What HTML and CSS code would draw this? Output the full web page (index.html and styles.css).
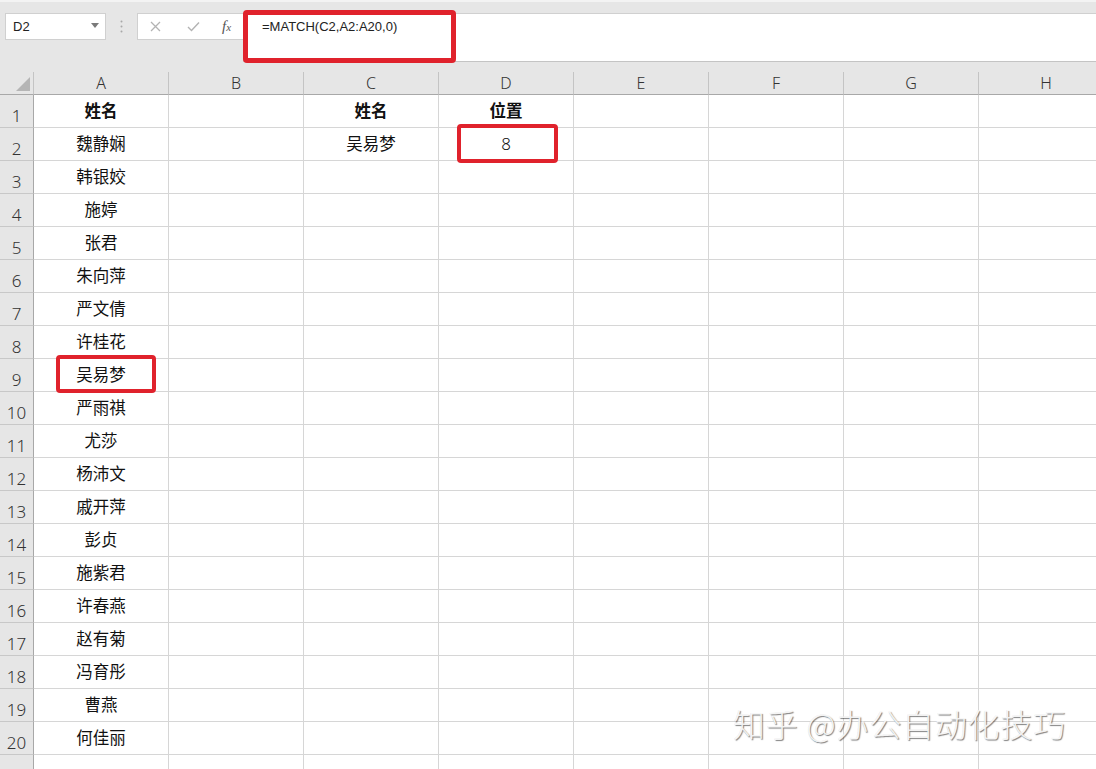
FILE: index.html
```html
<!DOCTYPE html>
<html lang="zh-CN">
<head>
<meta charset="utf-8">
<title>MATCH</title>
<link rel="stylesheet" href="styles.css">
</head>
<body>
<div class="app">
  <div class="toolbar">
    <div class="namebox">
      <span class="nb-text">D2</span>
      <svg class="nb-arrow" width="8" height="5" viewBox="0 0 8 5"><path d="M0 0H8L4 5Z" fill="#7a7a7a"/></svg>
    </div>
    <div class="dots">
      <svg width="3" height="13" viewBox="0 0 3 13"><circle cx="1.5" cy="1.5" r="1" fill="#a8a8a8"/><circle cx="1.5" cy="6.5" r="1" fill="#a8a8a8"/><circle cx="1.5" cy="11.5" r="1" fill="#a8a8a8"/></svg>
    </div>
    <div class="fbtns">
      <svg class="ico-x" width="11" height="11" viewBox="0 0 11 11"><path d="M1 1L10 10M10 1L1 10" stroke="#b3b3b3" stroke-width="1.3" fill="none"/></svg>
      <svg class="ico-ok" width="13" height="11" viewBox="0 0 13 11"><path d="M1 6L4.5 9.5L12 1.5" stroke="#b3b3b3" stroke-width="1.4" fill="none"/></svg>
      <span class="fx"><i>f</i><span class="fxx">x</span></span>
    </div>
    <div class="finput">=MATCH(C2,A2:A20,0)</div>
  </div>

  <div class="sheet">
    <div class="row head">
      <div class="corner"><svg width="14" height="14" viewBox="0 0 14 14"><path d="M14 0V14H0Z" fill="#b5b5b5"/></svg></div>
      <div class="ch">A</div><div class="ch">B</div><div class="ch">C</div><div class="ch">D</div><div class="ch">E</div><div class="ch">F</div><div class="ch">G</div><div class="ch">H</div>
    </div>
    <div class="row"><div class="rh">1</div><div class="c b">姓名</div><div class="c"></div><div class="c b">姓名</div><div class="c b">位置</div><div class="c"></div><div class="c"></div><div class="c"></div><div class="c"></div></div>
    <div class="row"><div class="rh">2</div><div class="c">魏静娴</div><div class="c"></div><div class="c">吴易梦</div><div class="c num">8</div><div class="c"></div><div class="c"></div><div class="c"></div><div class="c"></div></div>
    <div class="row"><div class="rh">3</div><div class="c">韩银姣</div><div class="c"></div><div class="c"></div><div class="c"></div><div class="c"></div><div class="c"></div><div class="c"></div><div class="c"></div></div>
    <div class="row"><div class="rh">4</div><div class="c">施婷</div><div class="c"></div><div class="c"></div><div class="c"></div><div class="c"></div><div class="c"></div><div class="c"></div><div class="c"></div></div>
    <div class="row"><div class="rh">5</div><div class="c">张君</div><div class="c"></div><div class="c"></div><div class="c"></div><div class="c"></div><div class="c"></div><div class="c"></div><div class="c"></div></div>
    <div class="row"><div class="rh">6</div><div class="c">朱向萍</div><div class="c"></div><div class="c"></div><div class="c"></div><div class="c"></div><div class="c"></div><div class="c"></div><div class="c"></div></div>
    <div class="row"><div class="rh">7</div><div class="c">严文倩</div><div class="c"></div><div class="c"></div><div class="c"></div><div class="c"></div><div class="c"></div><div class="c"></div><div class="c"></div></div>
    <div class="row"><div class="rh">8</div><div class="c">许桂花</div><div class="c"></div><div class="c"></div><div class="c"></div><div class="c"></div><div class="c"></div><div class="c"></div><div class="c"></div></div>
    <div class="row"><div class="rh">9</div><div class="c">吴易梦</div><div class="c"></div><div class="c"></div><div class="c"></div><div class="c"></div><div class="c"></div><div class="c"></div><div class="c"></div></div>
    <div class="row"><div class="rh">10</div><div class="c">严雨祺</div><div class="c"></div><div class="c"></div><div class="c"></div><div class="c"></div><div class="c"></div><div class="c"></div><div class="c"></div></div>
    <div class="row"><div class="rh">11</div><div class="c">尤莎</div><div class="c"></div><div class="c"></div><div class="c"></div><div class="c"></div><div class="c"></div><div class="c"></div><div class="c"></div></div>
    <div class="row"><div class="rh">12</div><div class="c">杨沛文</div><div class="c"></div><div class="c"></div><div class="c"></div><div class="c"></div><div class="c"></div><div class="c"></div><div class="c"></div></div>
    <div class="row"><div class="rh">13</div><div class="c">戚开萍</div><div class="c"></div><div class="c"></div><div class="c"></div><div class="c"></div><div class="c"></div><div class="c"></div><div class="c"></div></div>
    <div class="row"><div class="rh">14</div><div class="c">彭贞</div><div class="c"></div><div class="c"></div><div class="c"></div><div class="c"></div><div class="c"></div><div class="c"></div><div class="c"></div></div>
    <div class="row"><div class="rh">15</div><div class="c">施紫君</div><div class="c"></div><div class="c"></div><div class="c"></div><div class="c"></div><div class="c"></div><div class="c"></div><div class="c"></div></div>
    <div class="row"><div class="rh">16</div><div class="c">许春燕</div><div class="c"></div><div class="c"></div><div class="c"></div><div class="c"></div><div class="c"></div><div class="c"></div><div class="c"></div></div>
    <div class="row"><div class="rh">17</div><div class="c">赵有菊</div><div class="c"></div><div class="c"></div><div class="c"></div><div class="c"></div><div class="c"></div><div class="c"></div><div class="c"></div></div>
    <div class="row"><div class="rh">18</div><div class="c">冯育彤</div><div class="c"></div><div class="c"></div><div class="c"></div><div class="c"></div><div class="c"></div><div class="c"></div><div class="c"></div></div>
    <div class="row"><div class="rh">19</div><div class="c">曹燕</div><div class="c"></div><div class="c"></div><div class="c"></div><div class="c"></div><div class="c"></div><div class="c"></div><div class="c"></div></div>
    <div class="row"><div class="rh">20</div><div class="c">何佳丽</div><div class="c"></div><div class="c"></div><div class="c"></div><div class="c"></div><div class="c"></div><div class="c"></div><div class="c"></div></div>
    <div class="row"><div class="rh"></div><div class="c"></div><div class="c"></div><div class="c"></div><div class="c"></div><div class="c"></div><div class="c"></div><div class="c"></div><div class="c"></div></div>
  </div>

  <div class="mark mark-formula"></div>
  <div class="mark mark-d2"></div>
  <div class="mark mark-a9"></div>
  <div class="watermark">知乎 @办公自动化技巧</div>
</div>
</body>
</html>
```

FILE: styles.css
```css
* { box-sizing: border-box; }
html, body { margin: 0; padding: 0; }
body {
  width: 1096px;
  height: 769px;
  overflow: hidden;
  background: #ffffff;
  font-family: "Noto Sans CJK SC", "Noto Sans", sans-serif;
}
.app {
  position: relative;
  width: 1096px;
  height: 769px;
  overflow: hidden;
}

/* toolbar / formula bar */
.toolbar {
  height: 72px;
  background: #e6e6e6;
  border-top: 2px solid #f3f3f3;
  display: flex;
  align-items: flex-start;
  padding-top: 11px;
}
.namebox {
  margin-left: 5px;
  width: 101px;
  height: 27px;
  background: #fff;
  border: 1px solid #d0d0d0;
  display: flex;
  align-items: center;
  justify-content: space-between;
  padding: 0 6px 0 7px;
}
.nb-text {
  font-family: "Liberation Sans", Arial, sans-serif;
  font-size: 13px;
  color: #222;
}
.nb-arrow { margin-top: -2px; }
.dots {
  width: 31px;
  height: 27px;
  display: flex;
  align-items: center;
  justify-content: center;
}
.fbtns {
  width: 106px;
  height: 27px;
  background: #fff;
  border: 1px solid #d0d0d0;
  border-right: none;
  display: flex;
  align-items: center;
  padding-left: 12px;
}
.ico-x { margin-right: 26px; }
.ico-ok { margin-right: 22px; }
.fx {
  font-family: "Liberation Serif", "Times New Roman", serif;
  font-size: 14px;
  color: #555;
  font-style: italic;
  display: inline-flex;
  align-items: baseline;
}
.fx i { font-size: 15px; }
.fxx { font-size: 11px; }
.finput {
  flex: 1;
  height: 49px;
  background: #fff;
  border-top: 1px solid #d0d0d0;
  border-bottom: 1px solid #c4c4c4;
  border-left: 1px solid #d0d0d0;
  padding: 5px 0 0 18px;
  font-family: "Liberation Sans", Arial, sans-serif;
  font-size: 13px;
  color: #222;
}

/* sheet grid */
.sheet { background: #fff; }
.row {
  display: flex;
  height: 33px;
}
.row.head {
  height: 23px;
  background: #e6e6e6;
}
.corner {
  width: 34px;
  flex: none;
  border-right: 1px solid #c4c4c4;
  border-bottom: 1px solid #a8a8a8;
  display: flex;
  align-items: flex-end;
  justify-content: flex-end;
  padding: 0 3px 3px 0;
}
.ch {
  width: 135px;
  flex: none;
  border-right: 1px solid #c4c4c4;
  border-bottom: 1px solid #a8a8a8;
  text-align: center;
  font-family: "Noto Sans", "Liberation Sans", sans-serif;
  font-weight: 300;
  font-size: 16px;
  line-height: 22px;
  color: #333;
}
.rh {
  width: 34px;
  flex: none;
  background: #e6e6e6;
  border-right: 1px solid #a8a8a8;
  border-bottom: 1px solid #c8c8c8;
  display: flex;
  align-items: flex-end;
  justify-content: center;
  font-family: "Noto Sans", "Liberation Sans", sans-serif;
  font-weight: 300;
  font-size: 17px;
  line-height: 20px;
  color: #333;
  padding-bottom: 1px;
}
.c {
  width: 135px;
  flex: none;
  border-right: 1px solid #d6d6d6;
  border-bottom: 1px solid #d6d6d6;
  display: flex;
  align-items: center;
  justify-content: center;
  font-size: 16.5px;
  color: #111;
  padding-bottom: 2px;
}
.c.b { font-weight: 700; }
.c.num {
  font-family: "Noto Sans", "Liberation Sans", sans-serif;
  font-weight: 300;
  font-size: 17px;
}

/* overlays */
.mark {
  position: absolute;
  border: 4px solid #e0222c;
  border-radius: 4px;
}
.mark-formula {
  left: 243px;
  top: 10px;
  width: 213px;
  height: 53px;
  border-width: 5px;
}
.mark-d2 {
  left: 457px;
  top: 124px;
  width: 101px;
  height: 39px;
}
.mark-a9 {
  left: 56px;
  top: 355px;
  width: 100px;
  height: 38px;
}
.watermark {
  position: absolute;
  left: 733px;
  top: 701px;
  font-size: 32px;
  font-weight: 300;
  letter-spacing: 0.8px;
  line-height: 44px;
  color: rgba(250, 250, 250, 0.92);
  text-shadow: 1px 1px 1px rgba(0, 0, 0, 0.5), -0.5px -0.5px 0 rgba(0,0,0,0.08);
  white-space: nowrap;
}
```
